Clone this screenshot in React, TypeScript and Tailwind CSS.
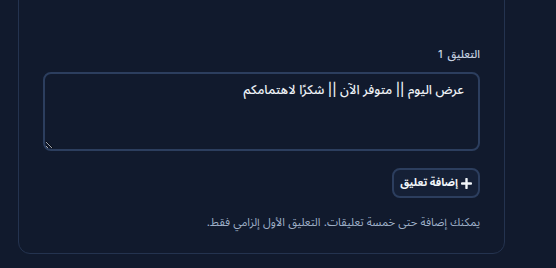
import React from "react";

export default function App() {
  return (
    <div className="w-[556px] h-[268px] overflow-hidden bg-[#111a2d] font-['Inter','Noto_Sans_Arabic',sans-serif]" dir="rtl">
      <div className="mr-[51px] ml-[18px] mt-[-20px] border border-[#24334f] rounded-[12px] px-6 pt-[64px] pb-[22px]">
        <label className="block text-[11px] font-medium text-[#c7d2e0] leading-[18px] mb-[9px]">
          التعليق <span className="mr-[2px]">1</span>
        </label>
        <textarea
          dir="rtl"
          defaultValue="عرض اليوم || متوفر الآن || شكرًا لاهتمامكم"
          className="block w-full h-[79px] bg-[#111a2d] border-2 border-[#2c3e5e] rounded-[8px] px-[14px] py-[4px] text-[12.75px] font-medium text-[#eef2f7] leading-[24px] outline-none resize-y font-['Inter','Noto_Sans_Arabic',sans-serif]"
        />
        <div className="flex mt-[17px]">
          <button className="flex items-center gap-[3px] h-[30px] px-[6px] bg-[#152036] border-2 border-[#2c3e5e] rounded-[8px] text-[10.75px] font-bold text-[#f1f5f9] font-['Inter','Noto_Sans_Arabic',sans-serif]">
            <svg width="11" height="11" viewBox="0 0 12 12"><path d="M6 1v10M1 6h10" stroke="#f1f5f9" strokeWidth="2.6" strokeLinecap="round" /></svg>
            <span>إضافة تعليق</span>
          </button>
        </div>
        <p className="mt-[15px] text-[11.25px] text-[#9fb0c8] leading-[18px]">يمكنك إضافة حتى خمسة تعليقات. التعليق الأول إلزامي فقط.</p>
      </div>
    </div>
  );
}
